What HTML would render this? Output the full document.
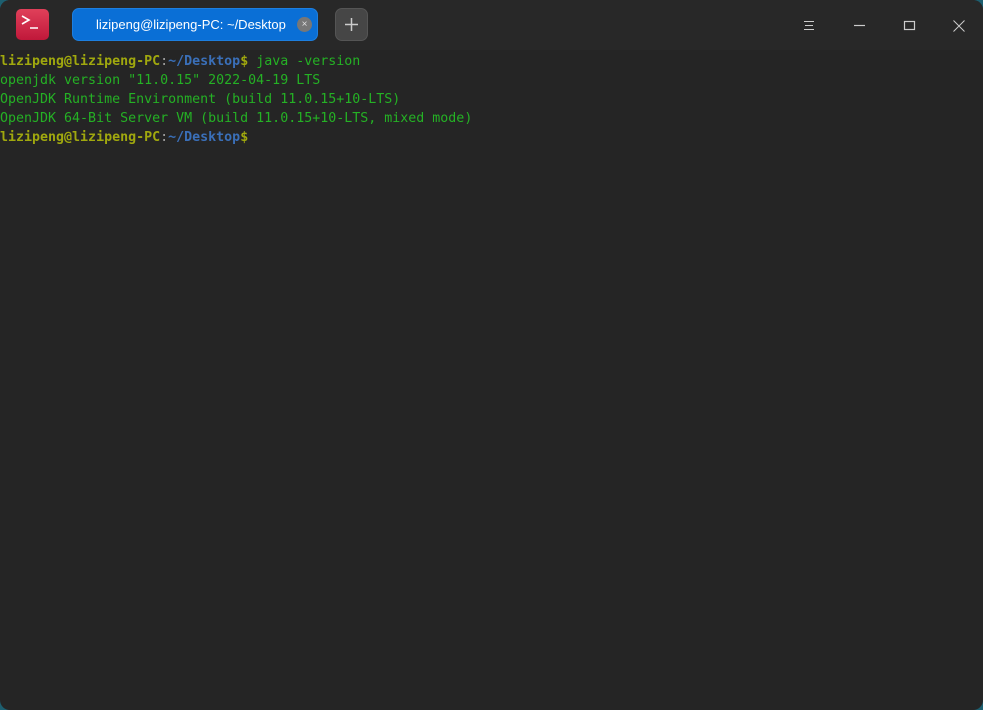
<!DOCTYPE html>
<html><head><style>
html,body{margin:0;padding:0;width:983px;height:710px;overflow:hidden;background:#1d5f70;}
.win{position:absolute;left:0;top:0;width:983px;height:710px;background:#252525;border-radius:10px;overflow:hidden;}
.tb{position:absolute;left:0;top:0;width:983px;height:50px;background:#282828;}
.logo{position:absolute;left:16px;top:9px;width:33px;height:31px;border-radius:5px;background:linear-gradient(#e0405a,#c0183a);}
.tab{position:absolute;left:72px;top:8px;width:246px;height:33px;border-radius:7px;background:#0a6fd6;border:1px solid #1d7fe0;box-sizing:border-box;color:#fff;font:13px "Liberation Sans",sans-serif;line-height:31px;}
.tab span{position:absolute;left:23px;}
.cl{position:absolute;left:224px;top:8px;width:15px;height:15px;border-radius:50%;background:#777;color:#ddd;font-size:10px;line-height:15px;text-align:center;}
.add{position:absolute;left:335px;top:8px;width:33px;height:33px;border-radius:7px;background:#464646;border:1px solid #555;box-sizing:border-box;}
pre{position:absolute;left:0;top:52px;margin:0;font:13.3px/19px "DejaVu Sans Mono",monospace;color:#25b125;}
.u{color:#a0a80e;font-weight:bold}.p{color:#3a6fb8;font-weight:bold}.w{color:#a0a0a0}
</style></head><body><div class="win">
<div class="tb">
<div class="logo"><svg width="33" height="31"><path d="M6 7l7 4-7 4" stroke="#fff" stroke-width="1.6" fill="none"/><path d="M14 19h8" stroke="#fff" stroke-width="1.6"/></svg></div>
<div class="tab"><span>lizipeng@lizipeng-PC: ~/Desktop</span><div class="cl">×</div></div>
<div class="add"><svg width="31" height="31"><path d="M15.5 9v13M9 15.5h13" stroke="#ccc" stroke-width="1.5"/></svg></div>
<svg style="position:absolute;left:780px;top:0" width="203" height="50">
<path d="M24 21.5h10M25 25.5h8M24 29.5h10" stroke="#ccc" stroke-width="1"/>
<path d="M74 25.5h11" stroke="#ccc" stroke-width="1.2"/>
<rect x="124.5" y="21.5" width="10" height="8" stroke="#ccc" stroke-width="1.2" fill="none"/>
<path d="M173.5 20.5l11 11M184.5 20.5l-11 11" stroke="#ccc" stroke-width="1"/>
</svg>
</div>
<pre><span class="u">lizipeng@lizipeng-PC</span><span class="w">:</span><span class="p">~/Desktop</span><span class="u">$</span> java -version
openjdk version "11.0.15" 2022-04-19 LTS
OpenJDK Runtime Environment (build 11.0.15+10-LTS)
OpenJDK 64-Bit Server VM (build 11.0.15+10-LTS, mixed mode)
<span class="u">lizipeng@lizipeng-PC</span><span class="w">:</span><span class="p">~/Desktop</span><span class="u">$</span></pre>
</div></body></html>
